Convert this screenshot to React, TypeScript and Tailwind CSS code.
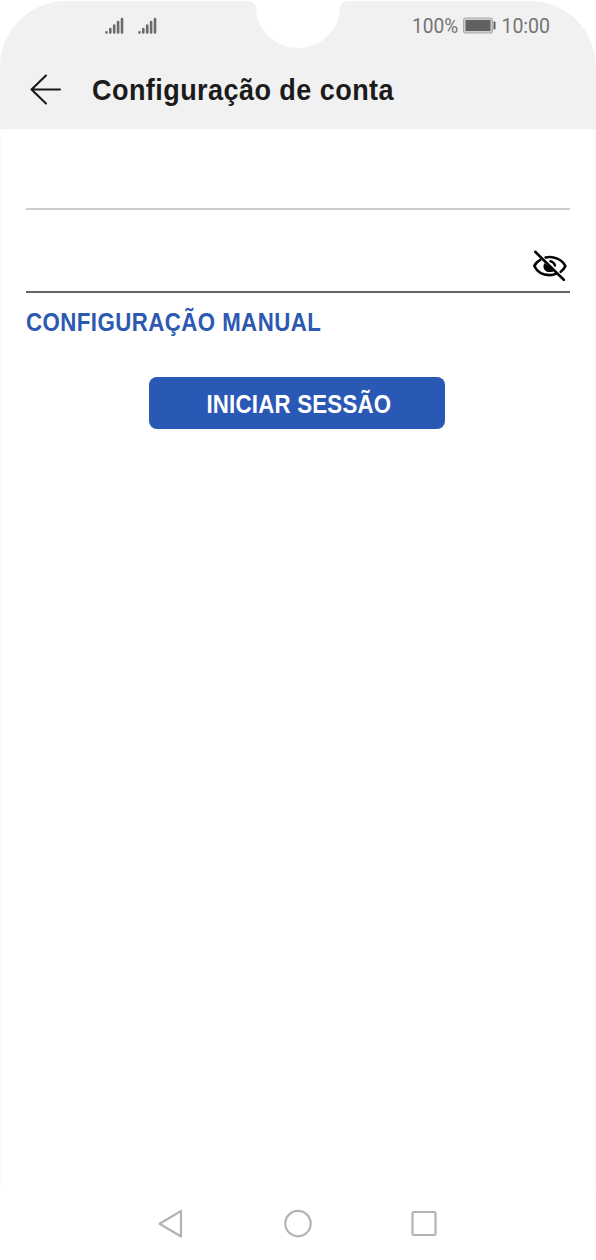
import React from "react";

function Signal() {
  return (
    <svg width="19" height="18" viewBox="0 0 19 18" fill="none" stroke="#6b6b6b" strokeWidth="2.6" strokeLinecap="round">
      <path d="M1.5 15.3V15.500M5.3 12V15.500M9.2 8.500V15.500M13.1 5V15.500M17 2V15.500" />
    </svg>
  );
}

function Battery() {
  return (
    <svg width="34" height="18" viewBox="0 0 34 18">
      <rect x="1.500" y="1" width="29" height="15" rx="2.6" fill="#cfcfcf" stroke="#aaaaaa" strokeWidth="1.1" />
      <rect x="3.500" y="3" width="25" height="11" fill="#616161" />
      <path d="M31.5 4.500h1.2q.8 0 .8.8v6.500q0 .8-.8.8H31.5z" fill="#616161" />
    </svg>
  );
}

function EyeOff() {
  return (
    <svg width="36" height="32" viewBox="0 0 36 32" fill="none" stroke="#050505" strokeWidth="2.6" strokeLinecap="round">
      <path d="M8.2 9.8C5.400 11.300 3.200 13.700 2.300 16C5 21.600 10.700 25.100 17.500 25.100C19.800 25.100 22 24.700 24 23.900" />
      <path d="M13.600 7.500C21.800 5.700 30 9.600 33.400 16C32.400 18.400 30.800 20.300 28.700 21.800" />
      <path d="M12.3 13.200C9.8 18.200 13.200 22 17.500 22C19.400 22 21.500 21.400 22.800 20.400L16.500 13.700L16 15.500Z" fill="#050505" stroke="none" />
      <path d="M18.400 11.200C20.800 11.900 22.300 13.300 23 15.500" strokeWidth="2.4" />
      <path d="M3.200 1.800L31.800 29.800" strokeWidth="2.6" />
    </svg>
  );
}

export default function App() {
  return (
    <div className="flex h-[1260px] w-[596px] flex-col overflow-hidden bg-white pt-px font-['Liberation_Sans',Arial,sans-serif]">
      <header className="relative flex h-32 shrink-0 flex-col rounded-t-[66px] bg-[#f1f1f1]">
        <svg className="absolute left-[248px] top-[-1px]" width="100" height="50" viewBox="0 0 100 50">
          <path d="M0 0V1C5 1 8 4 8 9C9 31 28 48 50 48C72 48 91 31 92 9C92 4 95 1 100 1V0Z" fill="#fff" />
        </svg>
        <div className="flex h-[50px] items-center justify-between pl-[105px] pr-[46px]">
          <div className="flex gap-[14px]">
            <Signal />
            <Signal />
          </div>
          <div className="flex items-center font-['Roboto',sans-serif] text-[19.5px] leading-none text-[#747474]">
            <span className="w-[50px] origin-left scale-x-[0.98] pt-[2px]">100%</span>
            <Battery />
            <span className="ml-[5px] pt-[2px]">10:00</span>
          </div>
        </div>
        <div className="flex h-[78px] items-start pl-[30px] pt-[22px]">
          <svg width="32" height="32" viewBox="0 0 32 32" fill="none" stroke="#1a1a1a" strokeWidth="2.1" strokeLinecap="round" strokeLinejoin="round">
            <path d="M30 16.500H1.500M16 2.500L1.500 16.500L16 30.500" />
          </svg>
          <h1 className="ml-[30px] mt-px origin-left scale-x-[0.9] whitespace-nowrap text-[30px] font-bold leading-8 tracking-[0.5px] text-[#1b1b1b]">
            Configuração de conta
          </h1>
        </div>
      </header>
      <main className="flex flex-1 flex-col border-x border-[#fbfbfb] px-[25px]">
        <div className="h-[81px] shrink-0 border-b-2 border-[#cdcdcd]" />
        <div className="flex h-[83px] shrink-0 items-end justify-end border-b-2 border-[#666666] pb-[9px] pr-[2px]">
          <EyeOff />
        </div>
        <a className="mt-[13px] h-8 origin-left scale-x-[0.89] whitespace-nowrap text-[25px] font-bold leading-8 tracking-[0.5px] text-[#2c59b1]">
          CONFIGURAÇÃO MANUAL
        </a>
        <button className="ml-[123px] mt-[39px] flex h-[52px] w-[296px] items-center justify-center rounded-lg bg-[#2a58b5] text-[25px] font-bold text-white">
          <span className="ml-[3px] scale-x-[0.89] whitespace-nowrap pt-[4px] tracking-[0.25px]">INICIAR SESSÃO</span>
        </button>
      </main>
      <nav className="flex h-[74px] shrink-0 items-start justify-between pl-[156px] pr-[158px] pt-[22px]">
        <svg width="28" height="32" viewBox="0 0 28 32" fill="none" stroke="#b3b3b3" strokeWidth="2.2" strokeLinejoin="round">
          <path d="M25 3V28.500L3.500 15.700Z" />
        </svg>
        <svg width="30" height="32" viewBox="0 0 30 32" fill="none" stroke="#b3b3b3" strokeWidth="2.2">
          <circle cx="16" cy="15.600" r="12.700" />
        </svg>
        <svg width="28" height="32" viewBox="0 0 28 32" fill="none" stroke="#b3b3b3" strokeWidth="2.2">
          <rect x="2.500" y="4" width="23" height="23" rx="1" />
        </svg>
      </nav>
    </div>
  );
}
